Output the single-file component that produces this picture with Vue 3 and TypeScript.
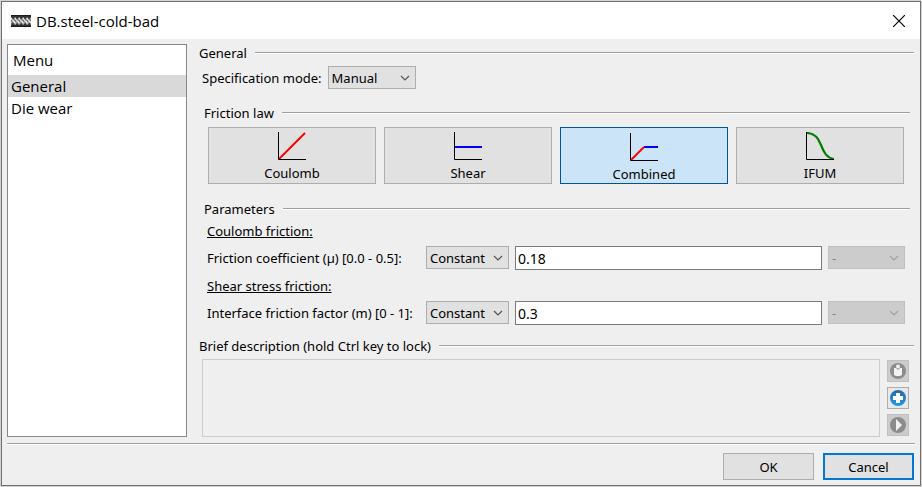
<script setup lang="ts">
import { ref } from 'vue'

type Law = 'Coulomb' | 'Shear' | 'Combined' | 'IFUM'
interface Param {
  id: string
  heading: string
  label: string
  value: string
}

const laws: Law[] = ['Coulomb', 'Shear', 'Combined', 'IFUM']
const menu = ['General', 'Die wear']
const activeMenu = ref('General')
const activeLaw = ref<Law>('Combined')
const mode = ref('Manual')
const description = ref('')
const params = ref<Param[]>([
  { id: 'mu', heading: 'Coulomb friction:', label: 'Friction coefficient (µ) [0.0 - 0.5]:', value: '0.18' },
  { id: 'm', heading: 'Shear stress friction:', label: 'Interface friction factor (m) [0 - 1]:', value: '0.3' },
])
</script>

<template>
  <div class="desktop">
    <div class="window">
      <header class="titlebar">
        <svg class="logo" width="20" height="14" viewBox="0 0 20 14" aria-hidden="true">
          <rect y="1" width="20" height="12" fill="#6a6a6a" />
          <path d="M0 4l5 6M4 4l5 6M8 4l5 6M12 4l5 6M16 4l4 5" fill="none" stroke="#f0f0f0" stroke-width="1.6" />
          <path d="M4 4l-4 5M8 4l-4 6M12 4l-4 6M16 4l-4 6M20 4l-4 6" fill="none" stroke="#b4b4b4" />
          <path d="M0 2h20M0 12h20" stroke="#1c1c1c" stroke-width="2" />
          <path d="M4 2l2 4 2-4M8 2l2 4 2-4M12 2l2 4 2-4M0 2l2 4 2-4M16 2l2 4 2-4M0 12l2-3 2 3M4 12l2-3 2 3M8 12l2-3 2 3M12 12l2-3 2 3M16 12l2-3 2 3" fill="#333" />
        </svg>
        <h1 class="title">DB.steel-cold-bad</h1>
        <button class="close" type="button" aria-label="Close">
          <svg width="12" height="12" viewBox="0 0 12 12"><path d="M0 0l12 12M12 0L0 12" stroke="#000" stroke-width="1.2" /></svg>
        </button>
      </header>

      <div class="body">
        <nav class="menu">
          <div class="menu-head">Menu</div>
          <button
            v-for="item in menu"
            :key="item"
            type="button"
            class="menu-item"
            :class="{ selected: item === activeMenu }"
            @click="activeMenu = item"
          >{{ item }}</button>
        </nav>

        <main class="content">
          <h2 class="group">General</h2>
          <div class="mode-row">
            <label for="mode">Specification mode:</label>
            <span class="combo mode-combo">
              <select id="mode" v-model="mode"><option>Manual</option></select>
              <svg width="10" height="6" viewBox="0 0 10 6"><path d="M1 1l4 4 4-4" /></svg>
            </span>
          </div>

          <section class="inner">
            <h2 class="group">Friction law</h2>
            <div class="laws">
              <button
                v-for="law in laws"
                :key="law"
                type="button"
                class="law"
                :class="{ active: law === activeLaw }"
                @click="activeLaw = law"
              >
                <svg width="28" height="28" viewBox="0 0 28 28" fill="none">
                  <path v-if="law === 'Coulomb'" d="M1 27L27 1" stroke="#f00" stroke-width="2" />
                  <path v-if="law === 'Shear'" d="M1 15h27" stroke="#00f" stroke-width="2" />
                  <template v-if="law === 'Combined'">
                    <path d="M14 14h14" stroke="#00f" stroke-width="2" />
                    <path d="M1 27L14 14" stroke="#f00" stroke-width="2" />
                  </template>
                  <path v-if="law === 'IFUM'" d="M1 1c7 0 11 4 14 12s6 13 13 14" stroke="#008000" stroke-width="2.2" />
                  <path d="M.5 0v27.500h27.500" stroke="#000" />
                </svg>
                <span>{{ law }}</span>
              </button>
            </div>
          </section>

          <section class="inner parameters">
            <h2 class="group">Parameters</h2>
            <div v-for="p in params" :key="p.id" class="param">
              <h3 class="param-head">{{ p.heading }}</h3>
              <div class="param-row">
                <label :for="p.id">{{ p.label }}</label>
                <span class="combo">
                  <select :aria-label="p.heading"><option>Constant</option></select>
                  <svg width="10" height="6" viewBox="0 0 10 6"><path d="M1 1l4 4 4-4" /></svg>
                </span>
                <input :id="p.id" v-model="p.value" type="text" />
                <span class="combo disabled">
                  <select disabled aria-label="Unit"><option>-</option></select>
                  <svg width="10" height="6" viewBox="0 0 10 6"><path d="M1 1l4 4 4-4" /></svg>
                </span>
              </div>
            </div>
          </section>

          <section class="brief">
            <h2 class="group"><label for="brief">Brief description (hold Ctrl key to lock)</label></h2>
            <div class="brief-row">
              <textarea id="brief" v-model="description" readonly></textarea>
              <div class="tools">
                <button type="button" class="tool off" disabled aria-label="Info">
                  <svg width="18" height="18" viewBox="0 0 18 18">
                    <circle cx="9" cy="9" r="8" fill="#8c8c8c" />
                    <circle cx="9" cy="4.500" r="2" fill="#f2f2f2" />
                    <path d="M5 6h2l2 2 2-2h2v7l-2 1H7l-2-1z" fill="#f2f2f2" />
                  </svg>
                </button>
                <button type="button" class="tool" aria-label="Add">
                  <svg width="18" height="18" viewBox="0 0 18 18">
                    <defs>
                      <linearGradient id="blue" x1="0" y1="0" x2="0" y2="1">
                        <stop offset="0" stop-color="#2a669f" />
                        <stop offset="1" stop-color="#239be3" />
                      </linearGradient>
                    </defs>
                    <circle cx="9" cy="9" r="8" fill="url(#blue)" />
                    <path d="M7 4h4v3h3v4h-3v3H7v-3H4V7h3z" fill="#fff" />
                  </svg>
                </button>
                <button type="button" class="tool off" disabled aria-label="Play">
                  <svg width="18" height="18" viewBox="0 0 18 18">
                    <circle cx="9" cy="9" r="8" fill="#8c8c8c" />
                    <path d="M7 3l6 6-6 6z" fill="#f2f2f2" />
                  </svg>
                </button>
              </div>
            </div>
          </section>
        </main>
      </div>

      <footer class="footer">
        <button type="button" class="action">OK</button>
        <button type="button" class="action primary">Cancel</button>
      </footer>
    </div>
  </div>
</template>

<style>
body {
  margin: 0;
}
</style>

<style scoped>
* {
  box-sizing: border-box;
}
.desktop {
  display: flex;
  min-height: 100vh;
  padding: 1px;
  background: #d2d2d2;
  font: 13px/18px "Noto Sans", "Open Sans", sans-serif;
  color: #000;
}
.window {
  flex: 1;
  display: flex;
  flex-direction: column;
  border: 1px solid #707070;
  background: #efefef;
}
button,
select,
input,
textarea {
  font: inherit;
  color: inherit;
  border-radius: 0;
  margin: 0;
}
h1,
h2,
h3 {
  margin: 0;
  font: inherit;
}
.titlebar {
  display: flex;
  align-items: center;
  height: 37px;
  padding: 0 9px;
  background: #fff;
}
.title {
  flex: 1;
  margin-left: 5px;
  font: 15px/20px "Open Sans", "Noto Sans", sans-serif;
}
.close {
  display: flex;
  padding: 6px;
  border: 0;
  background: none;
}
.body {
  flex: 1;
  display: flex;
  gap: 12px;
  padding: 5px 6px 6px 5px;
}
.menu {
  flex: none;
  width: 180px;
  border: 1px solid #828790;
  background: #fff;
  font: 15px/20px "Open Sans", "Noto Sans", sans-serif;
}
.menu-head {
  padding: 5px;
}
.menu-item {
  display: block;
  width: 100%;
  height: 22px;
  padding: 0 3px;
  border: 0;
  background: none;
  text-align: left;
  line-height: 22px;
}
.menu-item.selected {
  background: #d9d9d9;
}
.content {
  flex: 1;
  min-width: 0;
  display: flex;
  flex-direction: column;
}
.group {
  display: flex;
  align-items: center;
  gap: 8px;
  white-space: nowrap;
}
.group::after {
  content: "";
  flex: 1;
  height: 2px;
  background: linear-gradient(#a0a0a0 50%, #fff 50%);
}
.mode-row {
  display: flex;
  align-items: center;
  gap: 6px;
  margin-top: 4px;
  padding-left: 3px;
}
.combo {
  display: grid;
  align-items: center;
  height: 23px;
  border: 1px solid #adadad;
  background: #e1e1e1;
}
.combo select {
  grid-area: 1 / 1;
  width: 100%;
  height: 21px;
  padding: 0 3px;
  border: 0;
  background: none;
  appearance: none;
}
.combo svg {
  grid-area: 1 / 1;
  justify-self: end;
  margin-right: 5px;
  pointer-events: none;
}
.combo path {
  fill: none;
  stroke: #555;
  stroke-width: 1.2;
}
.mode-combo {
  width: 88px;
}
.combo.disabled {
  border-color: #bfbfbf;
  background: #ccc;
}
.combo.disabled select {
  color: #838383;
  opacity: 1;
}
.combo.disabled path {
  stroke: #a0a0a0;
}
.inner {
  margin-top: 15px;
  padding: 0 5px;
}
.parameters {
  margin-top: 16px;
}
.inner > .group {
  margin-right: -1px;
}
.laws {
  display: grid;
  grid-template-columns: repeat(4, 1fr);
  gap: 8px;
  margin-top: 5px;
  padding: 0 5px 0 4px;
}
.law {
  display: flex;
  flex-direction: column;
  align-items: center;
  gap: 4px;
  height: 57px;
  padding: 4px 0 0;
  border: 1px solid #adadad;
  background: #e1e1e1;
}
.law.active {
  padding-top: 5px;
  border-color: #005499;
  background: #cce4f7;
}
.param {
  margin-top: 4px;
  padding: 0 4px 0 3px;
}
.param + .param {
  margin-top: 7px;
}
.param-head {
  text-decoration: underline;
}
.param-row {
  display: grid;
  grid-template-columns: 213px 83px 1fr 77px;
  column-gap: 6px;
  margin-top: 6px;
  white-space: nowrap;
}
.param-row label {
  line-height: 24px;
}
.param-row input {
  min-width: 0;
  height: 24px;
  padding: 0 2px;
  border: 1px solid #7a7a7a;
  background: #fff;
  font-size: 14px;
}
.brief {
  flex: 1;
  display: flex;
  flex-direction: column;
  margin-top: 12px;
}
.brief-row {
  flex: 1;
  display: flex;
  gap: 7px;
  margin-top: 4px;
  padding: 0 5px 0 3px;
}
textarea {
  flex: 1;
  min-width: 0;
  height: auto;
  border: 1px solid #ccc;
  background: #efefef;
  resize: none;
}
.tools {
  display: flex;
  flex-direction: column;
  justify-content: center;
  gap: 5px;
}
.tool {
  display: flex;
  padding: 1px;
  border: 1px solid #adadad;
  background: #e8e8e8;
}
.tool.off {
  border-color: #bfbfbf;
  background: #ccc;
}
.footer {
  display: flex;
  justify-content: flex-end;
  gap: 9px;
  margin: 0 5px;
  padding: 9px 1px 5px;
  border-top: 1px solid #a0a0a0;
  box-shadow: inset 0 1px #fff;
}
.action {
  width: 91px;
  height: 27px;
  padding: 0;
  border: 1px solid #adadad;
  background: #e1e1e1;
}
.action.primary {
  border: 2px solid #0078d7;
}
</style>
